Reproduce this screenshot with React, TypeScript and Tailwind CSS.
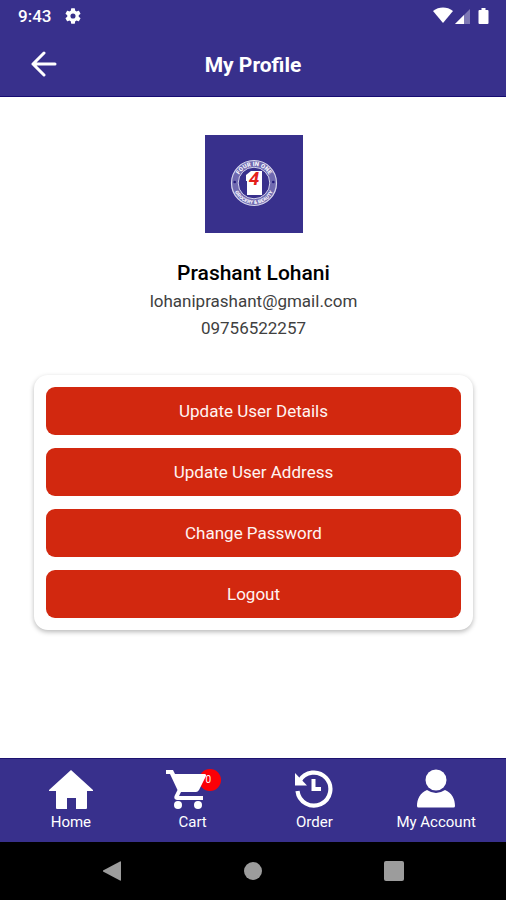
import type { ReactNode } from "react";

const actions = ["Update User Details", "Update User Address", "Change Password", "Logout"];

function StatusBar() {
  return (
    <div className="flex h-8 items-center justify-between pr-4 pl-[18px]">
      <div className="flex items-center gap-[14px]">
        <span className="text-[17px] leading-6 font-medium">9:43</span>
        <svg viewBox="2 2 20 20" className="size-4" fill="currentColor" aria-hidden="true">
          <path d="M19.14 12.94c.04-.3.06-.61.06-.94s-.02-.64-.07-.94l2.03-1.58a.49.49 0 0 0 .12-.61l-1.92-3.32a.49.49 0 0 0-.59-.22l-2.39.96a7 7 0 0 0-1.62-.94l-.36-2.54a.48.48 0 0 0-.48-.41h-3.84a.47.47 0 0 0-.47.41l-.36 2.54c-.59.24-1.13.57-1.62.94l-2.39-.96a.48.48 0 0 0-.59.22L2.74 8.87a.47.47 0 0 0 .12.61l2.03 1.58c-.05.3-.09.63-.09.94s.02.64.07.94l-2.03 1.58a.49.49 0 0 0-.12.61l1.92 3.32c.12.22.37.29.59.22l2.39-.96c.5.38 1.03.7 1.62.94l.36 2.54c.05.24.24.41.48.41h3.84c.24 0 .44-.17.47-.41l.36-2.54a7 7 0 0 0 1.62-.94l2.39.96c.22.08.47 0 .59-.22l1.92-3.32a.47.47 0 0 0-.12-.61zM12 15.2a3.2 3.2 0 1 1 0-6.4 3.2 3.2 0 0 1 0 6.4z" />
        </svg>
      </div>
      <svg viewBox="0 0 57 18" className="h-[18px] w-[57px]" fill="currentColor" aria-hidden="true">
        <path d="M0 4C6-.6 14-.6 20 4L10 16z" />
        <path d="M22 17 37 2v15z" opacity=".35" />
        <path d="M22 17 31 8v9z" />
        <path d="M48.500 1h4v2h2q1 0 1 1v12q0 1-1 1h-8q-1 0-1-1V4q0-1 1-1h2z" />
      </svg>
    </div>
  );
}

function Logo() {
  return (
    <svg viewBox="0 0 98 98" className="size-[98px] bg-[#38308c]" role="img" aria-label="Four in One">
      <circle cx="49" cy="48" r="19.300" fill="none" stroke="#6f69b0" strokeWidth="7" />
      <circle cx="49" cy="48" r="22.500" fill="none" stroke="#d5d5ec" strokeWidth="1.200" />
      <circle cx="49" cy="48" r="15.800" fill="none" stroke="#d5d5ec" strokeWidth="1" />
      <defs>
        <path id="logo-top" d="M32 48a17 17 0 0 1 34 0" />
        <path id="logo-bottom" d="M28 48a21 21 0 0 0 42 0" />
      </defs>
      <g fill="#f4f4fc" fontFamily="Roboto, sans-serif" fontWeight="900" textAnchor="middle">
        <text fontSize="6">
          <textPath href="#logo-top" startOffset="50%">FOUR IN ONE</textPath>
        </text>
        <text fontSize="5">
          <textPath href="#logo-bottom" startOffset="50%">GROCERY &amp; BEAUTY</textPath>
        </text>
      </g>
      <circle cx="29.700" cy="47" r="1.300" fill="#231b7c" />
      <circle cx="68.300" cy="47" r="1.300" fill="#231b7c" />
      <path d="M41 40l5-4h11v24H42V46h-1z" fill="#fff" />
      <text x="49" y="50" fill="#e3201b" fontFamily="Roboto, sans-serif" fontWeight="700" fontStyle="italic" fontSize="19" textAnchor="middle">
        4
      </text>
    </svg>
  );
}

function NavItem({ label, children }: { label: string; children: ReactNode }) {
  return (
    <a href="#" className="flex flex-1 flex-col items-center gap-[3px] pt-[10px]">
      <span className="relative">{children}</span>
      <span className="text-[15px] leading-5">{label}</span>
    </a>
  );
}

function BottomNav() {
  return (
    <nav className="flex h-21 border-t border-[#1c1270] bg-[#38308c] pr-[9px] pl-[10px] text-white">
      <NavItem label="Home">
        <svg viewBox="0 0 44 40" className="h-10 w-11" fill="currentColor" aria-hidden="true">
          <path d="M22 1 44 21v1h-6v17q0 1-1 1H27V29h-9v11H8q-1 0-1-1V22H0v-1z" />
        </svg>
      </NavItem>
      <NavItem label="Cart">
        <svg viewBox="0 0 57 40" className="h-10 w-[57px]" fill="currentColor" aria-hidden="true">
          <circle cx="46" cy="11" r="11" fill="#fb0007" />
          <path d="M2 1h7l2 4h30q1.500.500 1 2l-7 14q-1.200 2-3 2H17l-2 4h24v4H13q-3.500-.500-2.500-4l3-6L6 5H2z" />
          <circle cx="14" cy="36" r="4" />
          <circle cx="34" cy="36" r="4" />
        </svg>
        <span className="absolute top-1 right-[10px] text-[10px] leading-[14px]">0</span>
      </NavItem>
      <NavItem label="Order">
        <svg viewBox="0 0 40 40" className="size-10" fill="none" stroke="currentColor" aria-hidden="true">
          <path d="M5.500 12A16.500 16.500 0 1 1 3.500 22" strokeWidth="4.200" />
          <path d="M1 4v12.500h12z" fill="currentColor" stroke="none" />
          <path d="M19.500 10v10H27" strokeWidth="4" />
        </svg>
      </NavItem>
      <NavItem label="My Account">
        <svg viewBox="0 0 40 40" className="size-10" fill="currentColor" aria-hidden="true">
          <circle cx="20" cy="11" r="10.500" />
          <path d="M11 21q9 6 18 0c7 3 10 9 10 16q0 1.500-1.500 1.500h-35Q1 38.500 1 37c0-7 3-13 10-16z" />
        </svg>
      </NavItem>
    </nav>
  );
}

function SystemBar() {
  return (
    <div className="flex h-[58px] items-center bg-black px-[42px] text-[#9c9c9c]">
      <button aria-label="Back" className="flex flex-1 justify-center">
        <svg viewBox="0 0 20 22" className="h-[22px] w-5" fill="currentColor">
          <path d="M19 2v18q0 1-1 .5L1 11.500v-1l17-9q1-.5 1 .5z" />
        </svg>
      </button>
      <button aria-label="Home screen" className="flex flex-1 justify-center">
        <span className="size-[18px] rounded-full bg-[#9c9c9c]" />
      </button>
      <button aria-label="Recent apps" className="flex flex-1 justify-center">
        <span className="size-5 rounded-xs bg-[#9c9c9c]" />
      </button>
    </div>
  );
}

export default function App() {
  return (
    <div className="flex min-h-screen flex-col bg-white font-[Roboto,sans-serif] text-black">
      <header className="bg-[#38308c] text-white">
        <StatusBar />
        <div className="grid h-[65px] grid-cols-[1fr_auto_1fr] items-center border-b border-[#160c72] px-[30px]">
          <button aria-label="Go back" className="justify-self-start">
            <svg viewBox="0 0 28 26" className="h-[26px] w-7" fill="none" stroke="currentColor" strokeWidth="3" strokeLinecap="round" strokeLinejoin="round">
              <path d="M25 13H3M14 2 3 13l11 11" />
            </svg>
          </button>
          <h1 className="pt-[2px] text-[21px] leading-7 font-bold">My Profile</h1>
        </div>
      </header>

      <main className="flex flex-1 flex-col pt-[38px] pr-[33px] pl-[34px]">
        <div className="flex flex-col items-center">
          <Logo />
          <h2 className="mt-[26px] text-[21px] leading-7 font-medium">Prashant Lohani</h2>
          <p className="mt-px text-[17px] leading-[27px] text-[#404040]">lohaniprashant@gmail.com</p>
          <p className="text-[17px] leading-[27px] text-[#404040]">09756522257</p>
        </div>
        <div className="mt-[33px] mb-6 flex flex-col gap-[13px] rounded-[14px] bg-white p-3 shadow-[0_2px_5px_rgba(0,0,0,0.28)]">
          {actions.map((label) => (
            <button key={label} className="h-12 rounded-[9px] bg-[#d2280f] text-[17px] leading-6 text-[#fff4f2]">
              {label}
            </button>
          ))}
        </div>
      </main>

      <BottomNav />
      <SystemBar />
    </div>
  );
}
